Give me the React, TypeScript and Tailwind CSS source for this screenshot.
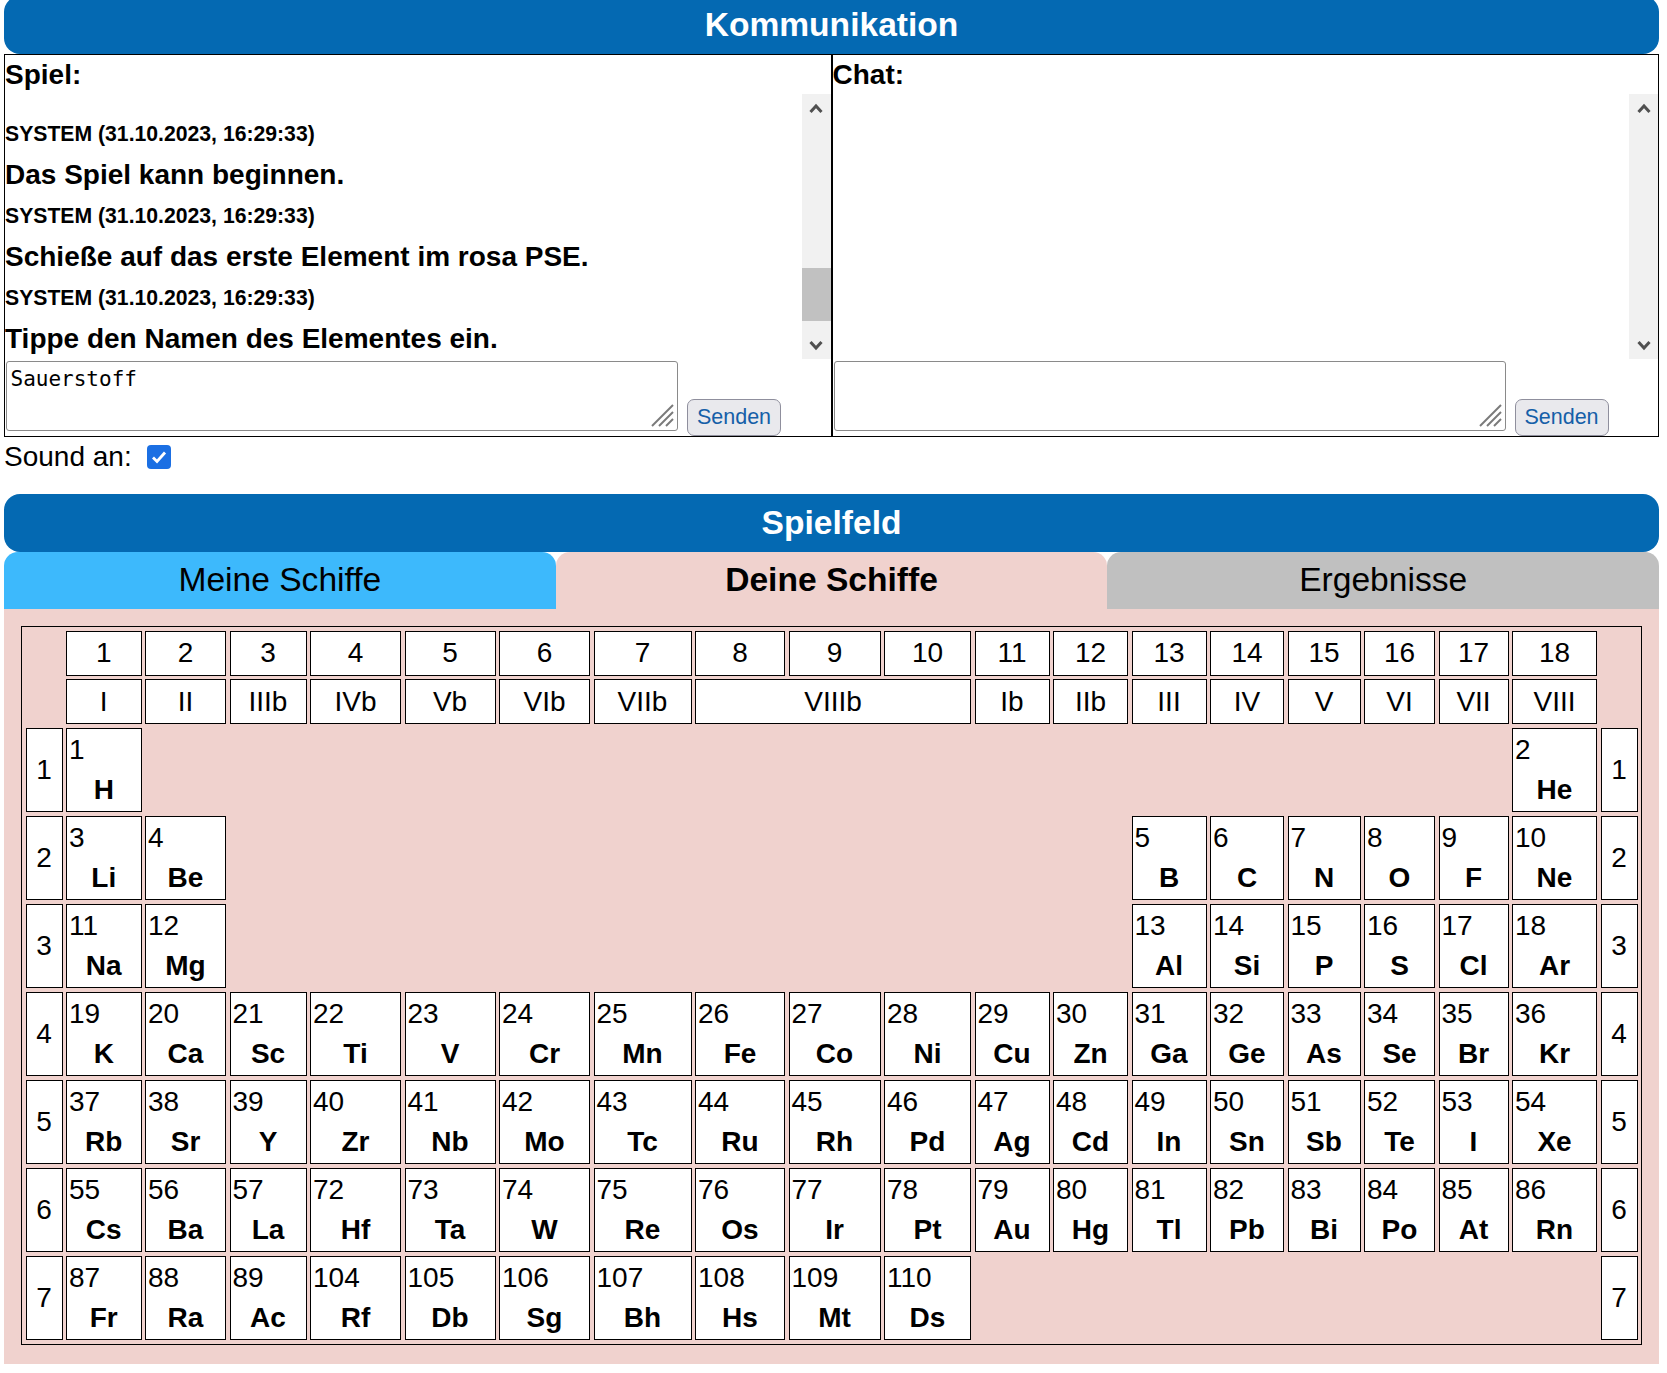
import React from "react";

type El = [number, string] | null;

const seq = (start: number, syms: string): El[] =>
  syms.split(" ").map((s, i) => [start + i, s] as El);
const empty = (n: number): El[] => Array(n).fill(null);

const PERIODS: El[][] = [
  [[1, "H"], ...empty(16), [2, "He"]],
  [...seq(3, "Li Be"), ...empty(10), ...seq(5, "B C N O F Ne")],
  [...seq(11, "Na Mg"), ...empty(10), ...seq(13, "Al Si P S Cl Ar")],
  seq(19, "K Ca Sc Ti V Cr Mn Fe Co Ni Cu Zn Ga Ge As Se Br Kr"),
  seq(37, "Rb Sr Y Zr Nb Mo Tc Ru Rh Pd Ag Cd In Sn Sb Te I Xe"),
  [...seq(55, "Cs Ba La"), ...seq(72, "Hf Ta W Re Os Ir Pt Au Hg Tl Pb Bi Po At Rn")],
  [...seq(87, "Fr Ra Ac"), ...seq(104, "Rf Db Sg Bh Hs Mt Ds"), ...empty(8)],
];

const ROMAN_LEFT = ["I", "II", "IIIb", "IVb", "Vb", "VIb", "VIIb"];
const ROMAN_RIGHT = ["Ib", "IIb", "III", "IV", "V", "VI", "VII", "VIII"];

const MESSAGES = [
  "Das Spiel kann beginnen.",
  "Schieße auf das erste Element im rosa PSE.",
  "Tippe den Namen des Elementes ein.",
];

function Chevron({ down }: { down?: boolean }) {
  return (
    <svg width="16" height="12" viewBox="0 0 16 12">
      <polyline
        points={down ? "2.5,3 8,9 13.5,3" : "2.5,9 8,3 13.5,9"}
        fill="none"
        stroke="#505050"
        strokeWidth="3"
      />
    </svg>
  );
}

function Scrollbar({ thumb }: { thumb?: boolean }) {
  return (
    <div className="flex w-[29px] shrink-0 flex-col bg-[#f1f1f1]">
      <div className="flex h-[29px] items-center justify-center">
        <Chevron />
      </div>
      <div className="flex-1" />
      {thumb && <div className="mb-[9px] h-[53px] bg-[#c1c1c1]" />}
      <div className="flex h-[29px] items-center justify-center">
        <Chevron down />
      </div>
    </div>
  );
}

function Panel({ title, text, log }: { title: string; text?: string; log?: boolean }) {
  return (
    <div className="flex flex-1 flex-col border border-black">
      <div className="h-[39px] font-bold leading-[39px]">{title}</div>
      <div className="flex h-[265px]">
        <div className="flex flex-1 flex-col justify-end overflow-hidden">
          {log &&
            MESSAGES.map((m) => (
              <div key={m}>
                <div className="h-[41px] text-[21.2px] font-bold leading-[41px]">
                  SYSTEM (31.10.2023, 16:29:33)
                </div>
                <div className="h-[41px] font-bold leading-[41px]">{m}</div>
              </div>
            ))}
        </div>
        <Scrollbar thumb={log} />
      </div>
      <div className="flex items-end">
        <div className="relative mb-[5px] ml-[1px] mt-[2px]">
          <textarea
            defaultValue={text}
            className="block h-[70px] w-[672px] resize-none rounded-[3px] border border-[#8a8a8a] bg-white px-[3.5px] pt-[5px] font-['DejaVu_Sans_Mono',monospace] text-[21px] leading-[24px] text-black outline-none"
          />
          <svg
            className="absolute bottom-[4px] right-[4px]"
            width="24"
            height="24"
            viewBox="0 0 24 24"
          >
            <g stroke="#7a7a7a" strokeWidth="2">
              <line x1="2" y1="23" x2="23" y2="2" />
              <line x1="9" y1="23" x2="23" y2="9" />
              <line x1="16" y1="23" x2="23" y2="16" />
            </g>
          </svg>
        </div>
        <button className="ml-[9px] h-[37px] w-[94px] rounded-[7px] border border-[#8f8f9d] bg-[#e9e9ed] text-[21.5px] text-[#155fa8]">
          Senden
        </button>
      </div>
    </div>
  );
}

function Head({ children, span }: { children: React.ReactNode; span?: boolean }) {
  return (
    <div
      className={
        span
          ? "col-span-3 flex items-center justify-center border border-black bg-white"
          : "flex items-center justify-center border border-black bg-white"
      }
    >
      {children}
    </div>
  );
}

function Label({ n }: { n: number }) {
  return (
    <div className="flex items-center justify-center border border-black bg-white">{n}</div>
  );
}

function Cell({ el }: { el: El }) {
  if (!el) return <div />;
  return (
    <div className="flex flex-col justify-center border border-black bg-white px-[2px] leading-[40px]">
      <div>{el[0]}</div>
      <div className="text-center font-bold">{el[1]}</div>
    </div>
  );
}

export default function App() {
  return (
    <div className="min-h-screen bg-white pl-[4px] pr-[8px] font-['Liberation_Sans',Arial,sans-serif] text-[28px] text-black">
      <div className="-mt-[4px] flex h-[58px] items-center justify-center rounded-[16px] bg-[#0469b2] text-[33.6px] font-bold text-white">
        Kommunikation
      </div>

      <div className="flex">
        <Panel title="Spiel:" text="Sauerstoff" log />
        <Panel title="Chat:" />
      </div>

      <div className="flex items-center pt-[4px] leading-[32px]">
        Sound an:
        <span className="ml-[15px] flex h-[24px] w-[24px] items-center justify-center rounded-[4px] bg-[#1b6fe3]">
          <svg width="16" height="14" viewBox="0 0 16 14">
            <polyline
              points="2,7.5 6,11.5 14,2.5"
              fill="none"
              stroke="white"
              strokeWidth="2.8"
            />
          </svg>
        </span>
      </div>

      <div className="mt-[21px] flex h-[58px] items-center justify-center rounded-[16px] bg-[#0469b2] text-[33.6px] font-bold text-white">
        Spielfeld
      </div>

      <div className="flex h-[57px] text-[33.6px]">
        <div className="flex flex-1 items-center justify-center rounded-t-[14px] bg-[#3db9fc]">
          Meine Schiffe
        </div>
        <div className="flex flex-1 items-center justify-center rounded-t-[14px] bg-[#f0d2ce] font-bold">
          Deine Schiffe
        </div>
        <div className="flex flex-1 items-center justify-center rounded-t-[14px] bg-[#c0c0c0]">
          Ergebnisse
        </div>
      </div>

      <div className="bg-[#f0d2ce] px-[17px] pb-[19px] pt-[17px]">
        <div className="grid w-fit grid-cols-[37px_75.5px_81px_77px_91px_91px_91px_98px_90px_92px_87px_75px_75px_75px_74px_73px_71px_70px_85px_37px] grid-rows-[45px_45px_repeat(7,84.5px)] gap-[3.5px] border border-black p-[3.5px]">
          <div />
          {Array.from({ length: 18 }, (_, i) => (
            <Head key={i}>{i + 1}</Head>
          ))}
          <div />

          <div />
          {ROMAN_LEFT.map((r) => (
            <Head key={r}>{r}</Head>
          ))}
          <Head span>VIIIb</Head>
          {ROMAN_RIGHT.map((r) => (
            <Head key={r}>{r}</Head>
          ))}
          <div />

          {PERIODS.map((row, p) => (
            <React.Fragment key={p}>
              <Label n={p + 1} />
              {row.map((el, i) => (
                <Cell key={i} el={el} />
              ))}
              <Label n={p + 1} />
            </React.Fragment>
          ))}
        </div>
      </div>
    </div>
  );
}
